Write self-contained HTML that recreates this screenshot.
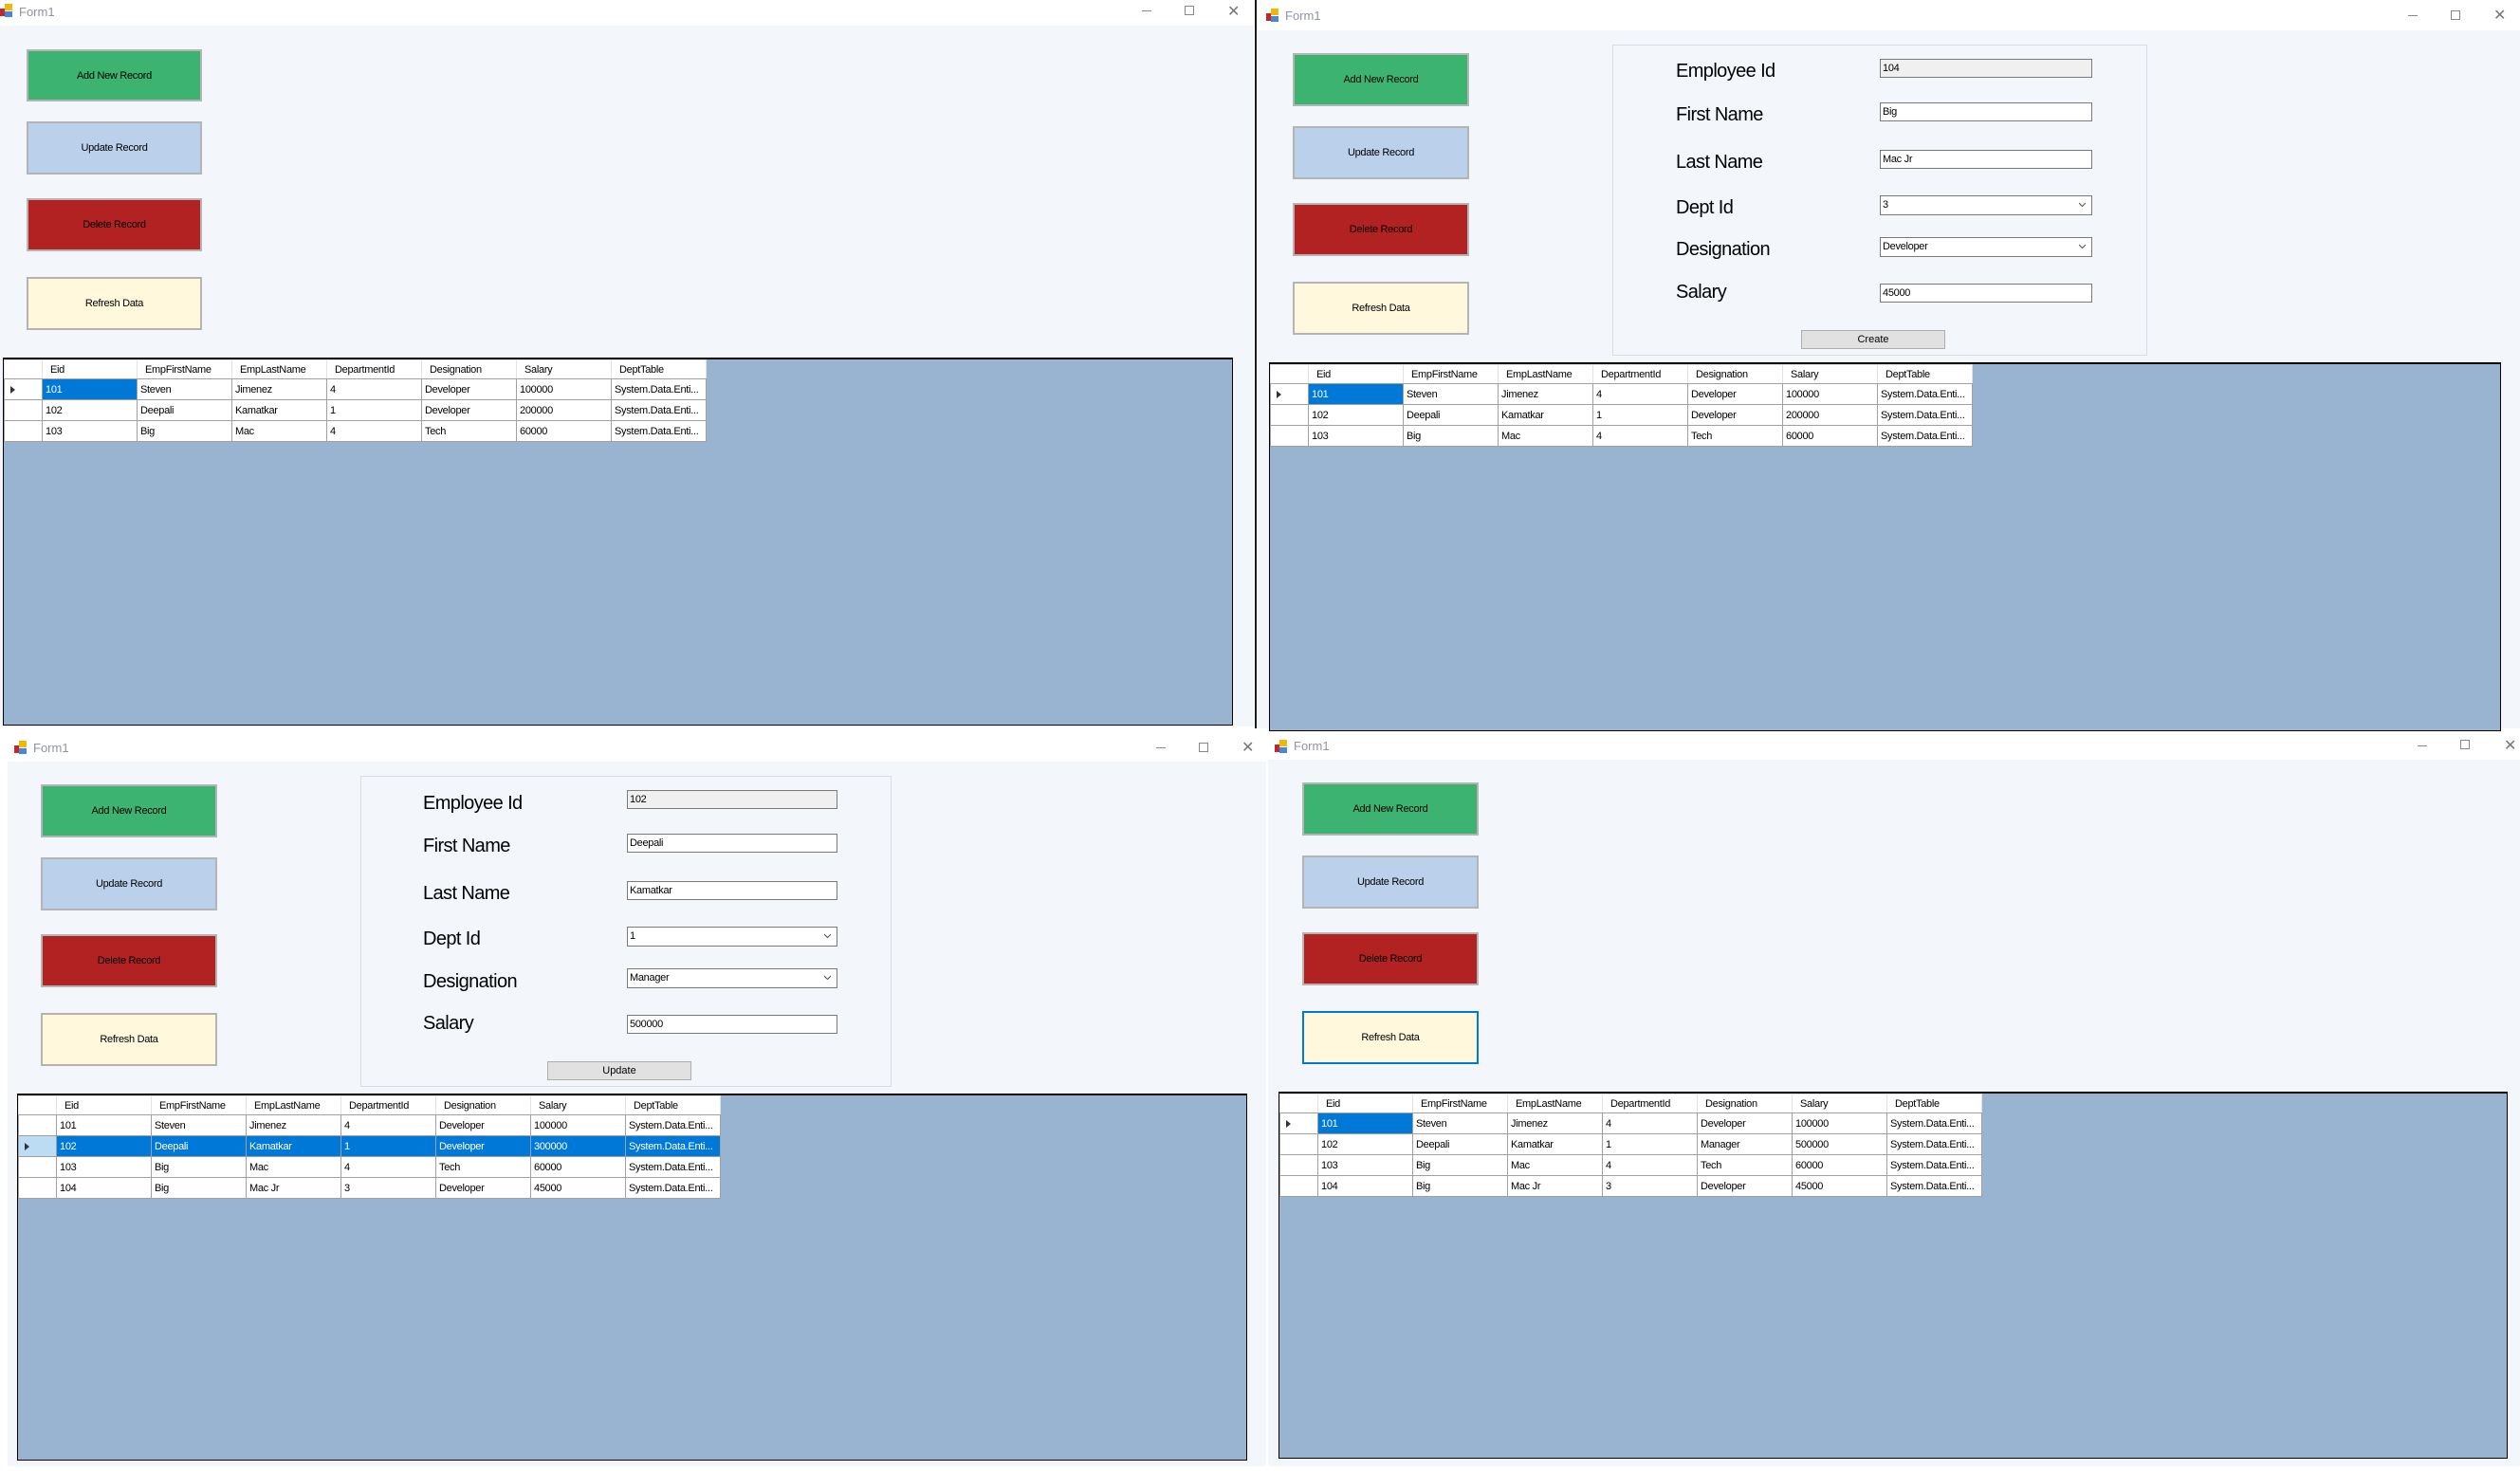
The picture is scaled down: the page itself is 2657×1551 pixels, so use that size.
<!DOCTYPE html>
<html><head><meta charset="utf-8">
<style>
*{box-sizing:border-box;margin:0;padding:0}
body{width:2657px;height:1551px;position:relative;background:#fff;font-family:"Liberation Sans",sans-serif;overflow:hidden}
.a{position:absolute}
.form{position:absolute;background:#f3f6fb}
.tb{position:absolute;background:#fff}
.ttl{position:absolute;font-size:13px;color:#8d94a8}
.ico{position:absolute;width:14px;height:14px}
.ico i{position:absolute;display:block}
.ctl{position:absolute;color:#777;font-size:14px}
.btn{position:absolute;border:2px solid #b4b4b4;font-size:11px;letter-spacing:-0.3px;display:flex;align-items:center;justify-content:center;color:#000}
.btn span{display:block}
.panel{position:absolute;border:1px solid #d9dde3;background:#f3f6fb}
.lbl{position:absolute;font-size:20px;letter-spacing:-0.6px;color:#000;line-height:20px}
.inp{position:absolute;border:1px solid #7a7a7a;background:#fff;font-size:11px;letter-spacing:-0.3px;line-height:18px;padding-left:2px;height:20px}
.inp.ro{background:#f0f0f0}
.inp .chev{position:absolute;right:6px;top:5px;width:7px;height:7px}
.pb{position:absolute;border:1px solid #adadad;background:#e1e1e1;font-size:11px;text-align:center;line-height:18px}
.grid{position:absolute;background:#99b4d1;border:1px solid #000;border-top:2px solid #000}
.grid table{border-collapse:collapse;font-size:11px;letter-spacing:-0.3px;position:absolute;left:0;top:0;table-layout:fixed}
.grid td{height:22px;border:1px solid #a0a0a0;background:#fff;padding-left:3px;white-space:nowrap;overflow:hidden;width:100px}
.grid tr.h td{height:20px;padding-left:8px;border-color:#e2e2e2;border-bottom:1px solid #a0a0a0}
.grid td.rh{width:40px;padding:0;border-right:1px solid #a0a0a0;position:relative}
.grid td.sel{background:#0078d7;color:#fff}
.grid td.rhs{background:#bcdcf4}
.arr{position:absolute;left:6px;top:7px;width:0;height:0;border-left:5px solid #333;border-top:4px solid transparent;border-bottom:4px solid transparent}
</style></head><body>

<!-- ===== Window 1 ===== -->
<div class="tb" style="left:0;top:0;width:1322px;height:27px"></div>
<div class="ico" style="left:0;top:4px"><i style="left:0;top:5px;width:5px;height:8px;background:#c0282d"></i><i style="left:5px;top:0;width:8px;height:7px;background:#f2b705"></i><i style="left:5px;top:8px;width:8px;height:6px;background:#4a86d8"></i></div>
<div class="ttl" style="left:20px;top:5px">Form1</div>
<div class="a" style="left:1204px;top:11px;width:10px;height:1px;background:#888"></div>
<div class="a" style="left:1249px;top:6px;width:10px;height:10px;border:1px solid #888"></div>
<div class="ctl" style="left:1294px;top:2px;font-size:16px">✕</div>
<div class="form" style="left:0;top:27px;width:1322px;height:739px"></div>
<div class="btn" style="left:28px;top:52px;width:185px;height:55px;background:#3cb371"><span>Add New Record</span></div>
<div class="btn" style="left:28px;top:128px;width:185px;height:56px;background:#bad0eb"><span>Update Record</span></div>
<div class="btn" style="left:28px;top:209px;width:185px;height:56px;background:#b22222"><span>Delete Record</span></div>
<div class="btn" style="left:28px;top:292px;width:185px;height:56px;background:#fff8dc"><span>Refresh Data</span></div>
<div class="grid" style="left:3px;top:377px;width:1297px;height:388px">
<table>
<tr class="h"><td class="rh"></td><td>Eid</td><td>EmpFirstName</td><td>EmpLastName</td><td>DepartmentId</td><td>Designation</td><td>Salary</td><td>DeptTable</td></tr>
<tr><td class="rh"><div class="arr"></div></td><td class="sel">101</td><td>Steven</td><td>Jimenez</td><td>4</td><td>Developer</td><td>100000</td><td>System.Data.Enti...</td></tr>
<tr><td class="rh"></td><td>102</td><td>Deepali</td><td>Kamatkar</td><td>1</td><td>Developer</td><td>200000</td><td>System.Data.Enti...</td></tr>
<tr><td class="rh"></td><td>103</td><td>Big</td><td>Mac</td><td>4</td><td>Tech</td><td>60000</td><td>System.Data.Enti...</td></tr>
</table></div>

<div class="a" style="left:1323px;top:0;width:2px;height:768px;background:#1a1a1a"></div>

<!-- ===== Window 2 ===== -->
<div class="tb" style="left:1326px;top:0;width:1331px;height:32px"></div>
<div class="ico" style="left:1335px;top:9px"><i style="left:0;top:5px;width:5px;height:8px;background:#c0282d"></i><i style="left:5px;top:0;width:8px;height:7px;background:#f2b705"></i><i style="left:5px;top:8px;width:8px;height:6px;background:#4a86d8"></i></div>
<div class="ttl" style="left:1355px;top:9px">Form1</div>
<div class="a" style="left:2539px;top:16px;width:10px;height:1px;background:#888"></div>
<div class="a" style="left:2584px;top:11px;width:10px;height:10px;border:1px solid #888"></div>
<div class="ctl" style="left:2629px;top:6px;font-size:16px">✕</div>
<div class="form" style="left:1326px;top:32px;width:1331px;height:736px"></div>
<div class="btn" style="left:1363px;top:56px;width:186px;height:56px;background:#3cb371"><span>Add New Record</span></div>
<div class="btn" style="left:1363px;top:133px;width:186px;height:56px;background:#bad0eb"><span>Update Record</span></div>
<div class="btn" style="left:1363px;top:214px;width:186px;height:56px;background:#b22222"><span>Delete Record</span></div>
<div class="btn" style="left:1363px;top:297px;width:186px;height:56px;background:#fff8dc"><span>Refresh Data</span></div>
<div class="panel" style="left:1700px;top:47px;width:564px;height:328px"></div>
<div class="lbl" style="left:1767px;top:65px">Employee Id</div>
<div class="lbl" style="left:1767px;top:111px">First Name</div>
<div class="lbl" style="left:1767px;top:161px">Last Name</div>
<div class="lbl" style="left:1767px;top:209px">Dept Id</div>
<div class="lbl" style="left:1767px;top:253px">Designation</div>
<div class="lbl" style="left:1767px;top:298px">Salary</div>
<div class="inp ro" style="left:1982px;top:62px;width:224px">104</div>
<div class="inp" style="left:1982px;top:108px;width:224px">Big</div>
<div class="inp" style="left:1982px;top:158px;width:224px">Mac Jr</div>
<div class="inp" style="left:1982px;top:206px;width:224px;height:21px">3<svg class="chev" viewBox="0 0 7 7"><path d="M0 2 L3.5 5.5 L7 2" fill="none" stroke="#555" stroke-width="1"/></svg></div>
<div class="inp" style="left:1982px;top:250px;width:224px;height:21px">Developer<svg class="chev" viewBox="0 0 7 7"><path d="M0 2 L3.5 5.5 L7 2" fill="none" stroke="#555" stroke-width="1"/></svg></div>
<div class="inp" style="left:1982px;top:299px;width:224px">45000</div>
<div class="pb" style="left:1899px;top:348px;width:152px;height:20px">Create</div>
<div class="grid" style="left:1338px;top:382px;width:1299px;height:389px">
<table>
<tr class="h"><td class="rh"></td><td>Eid</td><td>EmpFirstName</td><td>EmpLastName</td><td>DepartmentId</td><td>Designation</td><td>Salary</td><td>DeptTable</td></tr>
<tr><td class="rh"><div class="arr"></div></td><td class="sel">101</td><td>Steven</td><td>Jimenez</td><td>4</td><td>Developer</td><td>100000</td><td>System.Data.Enti...</td></tr>
<tr><td class="rh"></td><td>102</td><td>Deepali</td><td>Kamatkar</td><td>1</td><td>Developer</td><td>200000</td><td>System.Data.Enti...</td></tr>
<tr><td class="rh"></td><td>103</td><td>Big</td><td>Mac</td><td>4</td><td>Tech</td><td>60000</td><td>System.Data.Enti...</td></tr>
</table></div>

<!-- ===== Window 3 ===== -->
<div class="tb" style="left:8px;top:773px;width:1327px;height:30px"></div>
<div class="ico" style="left:15px;top:781px"><i style="left:0;top:5px;width:5px;height:8px;background:#c0282d"></i><i style="left:5px;top:0;width:8px;height:7px;background:#f2b705"></i><i style="left:5px;top:8px;width:8px;height:6px;background:#4a86d8"></i></div>
<div class="ttl" style="left:35px;top:781px">Form1</div>
<div class="a" style="left:1219px;top:788px;width:10px;height:1px;background:#888"></div>
<div class="a" style="left:1264px;top:783px;width:10px;height:10px;border:1px solid #888"></div>
<div class="ctl" style="left:1309px;top:778px;font-size:16px">✕</div>
<div class="form" style="left:8px;top:803px;width:1327px;height:743px"></div>
<div class="btn" style="left:43px;top:827px;width:186px;height:56px;background:#3cb371"><span>Add New Record</span></div>
<div class="btn" style="left:43px;top:904px;width:186px;height:56px;background:#bad0eb"><span>Update Record</span></div>
<div class="btn" style="left:43px;top:985px;width:186px;height:56px;background:#b22222"><span>Delete Record</span></div>
<div class="btn" style="left:43px;top:1068px;width:186px;height:56px;background:#fff8dc"><span>Refresh Data</span></div>
<div class="panel" style="left:380px;top:818px;width:560px;height:328px"></div>
<div class="lbl" style="left:446px;top:837px">Employee Id</div>
<div class="lbl" style="left:446px;top:882px">First Name</div>
<div class="lbl" style="left:446px;top:932px">Last Name</div>
<div class="lbl" style="left:446px;top:980px">Dept Id</div>
<div class="lbl" style="left:446px;top:1025px">Designation</div>
<div class="lbl" style="left:446px;top:1069px">Salary</div>
<div class="inp ro" style="left:661px;top:833px;width:222px">102</div>
<div class="inp" style="left:661px;top:879px;width:222px">Deepali</div>
<div class="inp" style="left:661px;top:929px;width:222px">Kamatkar</div>
<div class="inp" style="left:661px;top:977px;width:222px;height:21px">1<svg class="chev" viewBox="0 0 7 7"><path d="M0 2 L3.5 5.5 L7 2" fill="none" stroke="#555" stroke-width="1"/></svg></div>
<div class="inp" style="left:661px;top:1021px;width:222px;height:21px">Manager<svg class="chev" viewBox="0 0 7 7"><path d="M0 2 L3.5 5.5 L7 2" fill="none" stroke="#555" stroke-width="1"/></svg></div>
<div class="inp" style="left:661px;top:1070px;width:222px">500000</div>
<div class="pb" style="left:577px;top:1119px;width:152px;height:20px">Update</div>
<div class="grid" style="left:18px;top:1153px;width:1297px;height:387px">
<table>
<tr class="h"><td class="rh"></td><td>Eid</td><td>EmpFirstName</td><td>EmpLastName</td><td>DepartmentId</td><td>Designation</td><td>Salary</td><td>DeptTable</td></tr>
<tr><td class="rh"></td><td>101</td><td>Steven</td><td>Jimenez</td><td>4</td><td>Developer</td><td>100000</td><td>System.Data.Enti...</td></tr>
<tr><td class="rh rhs"><div class="arr"></div></td><td class="sel">102</td><td class="sel">Deepali</td><td class="sel">Kamatkar</td><td class="sel">1</td><td class="sel">Developer</td><td class="sel">300000</td><td class="sel">System.Data.Enti...</td></tr>
<tr><td class="rh"></td><td>103</td><td>Big</td><td>Mac</td><td>4</td><td>Tech</td><td>60000</td><td>System.Data.Enti...</td></tr>
<tr><td class="rh"></td><td>104</td><td>Big</td><td>Mac Jr</td><td>3</td><td>Developer</td><td>45000</td><td>System.Data.Enti...</td></tr>
</table></div>

<!-- ===== Window 4 ===== -->
<div class="tb" style="left:1337px;top:773px;width:1320px;height:28px"></div>
<div class="ico" style="left:1344px;top:780px"><i style="left:0;top:5px;width:5px;height:8px;background:#c0282d"></i><i style="left:5px;top:0;width:8px;height:7px;background:#f2b705"></i><i style="left:5px;top:8px;width:8px;height:6px;background:#4a86d8"></i></div>
<div class="ttl" style="left:1364px;top:779px">Form1</div>
<div class="a" style="left:2549px;top:786px;width:10px;height:1px;background:#888"></div>
<div class="a" style="left:2594px;top:780px;width:10px;height:10px;border:1px solid #888"></div>
<div class="ctl" style="left:2640px;top:776px;font-size:16px">✕</div>
<div class="form" style="left:1337px;top:801px;width:1320px;height:745px"></div>
<div class="btn" style="left:1373px;top:825px;width:186px;height:56px;background:#3cb371"><span>Add New Record</span></div>
<div class="btn" style="left:1373px;top:902px;width:186px;height:56px;background:#bad0eb"><span>Update Record</span></div>
<div class="btn" style="left:1373px;top:983px;width:186px;height:56px;background:#b22222"><span>Delete Record</span></div>
<div class="btn" style="left:1373px;top:1066px;width:186px;height:56px;background:#fff8dc;border-color:#0078d7"><span>Refresh Data</span></div>
<div class="grid" style="left:1348px;top:1151px;width:1296px;height:387px">
<table>
<tr class="h"><td class="rh"></td><td>Eid</td><td>EmpFirstName</td><td>EmpLastName</td><td>DepartmentId</td><td>Designation</td><td>Salary</td><td>DeptTable</td></tr>
<tr><td class="rh"><div class="arr"></div></td><td class="sel">101</td><td>Steven</td><td>Jimenez</td><td>4</td><td>Developer</td><td>100000</td><td>System.Data.Enti...</td></tr>
<tr><td class="rh"></td><td>102</td><td>Deepali</td><td>Kamatkar</td><td>1</td><td>Manager</td><td>500000</td><td>System.Data.Enti...</td></tr>
<tr><td class="rh"></td><td>103</td><td>Big</td><td>Mac</td><td>4</td><td>Tech</td><td>60000</td><td>System.Data.Enti...</td></tr>
<tr><td class="rh"></td><td>104</td><td>Big</td><td>Mac Jr</td><td>3</td><td>Developer</td><td>45000</td><td>System.Data.Enti...</td></tr>
</table></div>

</body></html>
